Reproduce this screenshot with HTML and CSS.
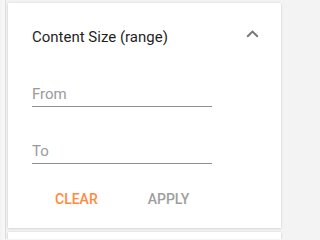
FILE: index.html
```html
<!DOCTYPE html>
<html>
<head>
<meta charset="utf-8">
<link rel="stylesheet" href="styles.css">
</head>
<body>
<div class="page">
  <div class="rail"></div>
  <div class="column">
    <section class="card">
      <header class="card-head">
        <h2 class="title">Content Size (range)</h2>
        <svg class="chevron" width="13" height="8" viewBox="0 0 13 8"><path d="M1.2 6.8 L6.5 1.6 L11.8 6.8" fill="none" stroke="#757575" stroke-width="1.9"/></svg>
      </header>
      <div class="field"><span class="placeholder">From</span></div>
      <div class="field"><span class="placeholder">To</span></div>
      <div class="actions">
        <button class="btn clear">CLEAR</button>
        <button class="btn apply">APPLY</button>
      </div>
    </section>
    <section class="card next"></section>
  </div>
</div>
</body>
</html>
```
FILE: styles.css
```css
html, body {
  margin: 0;
  padding: 0;
  background: #f3f3f3;
  font-family: Roboto, "Liberation Sans", sans-serif;
}
.page {
  display: flex;
  width: 285px;
  height: 239px;
  overflow: hidden;
}
.rail {
  width: 3px;
  margin-left: 2px;
  border-right: 1px solid #dcdcdc;
  background: #f7f7f7;
  flex: none;
}
.column {
  margin-left: 2px;
  width: 273px;
  flex: none;
  display: flex;
  flex-direction: column;
  gap: 4px;
  padding-top: 3px;
}
.card {
  background: #fff;
  box-shadow: 0 0 2px rgba(0,0,0,0.12), 0 1px 2px rgba(0,0,0,0.08);
  height: 225px;
  flex: none;
}
.card.next { height: 20px; }
.card-head {
  display: flex;
  align-items: center;
  justify-content: space-between;
  padding: 22px 22px 0 24px;
  height: 24px;
}
.title {
  margin: 0;
  font-size: 15px;
  font-weight: 400;
  color: #1f1f1f;
  line-height: 24px;
}
.chevron { margin-top: -6px; }
.field {
  margin: 37px 0 0 24px;
  width: 180px;
  border-bottom: 1px solid #8f8f8f;
  height: 20px;
}
.field + .field { margin-top: 36px; }
.placeholder {
  font-size: 15px;
  color: #9a9a9a;
  line-height: 17px;
  display: block;
}
.actions {
  display: flex;
  gap: 50px;
  margin: 27px 0 0 47px;
}
.btn {
  border: 0;
  background: none;
  padding: 0;
  font-family: Roboto, "Liberation Sans", sans-serif;
  font-size: 14px;
  font-weight: 500;
  line-height: 16px;
}
.clear { color: #ff8a3d; }
.apply { color: #9e9e9e; }
```
